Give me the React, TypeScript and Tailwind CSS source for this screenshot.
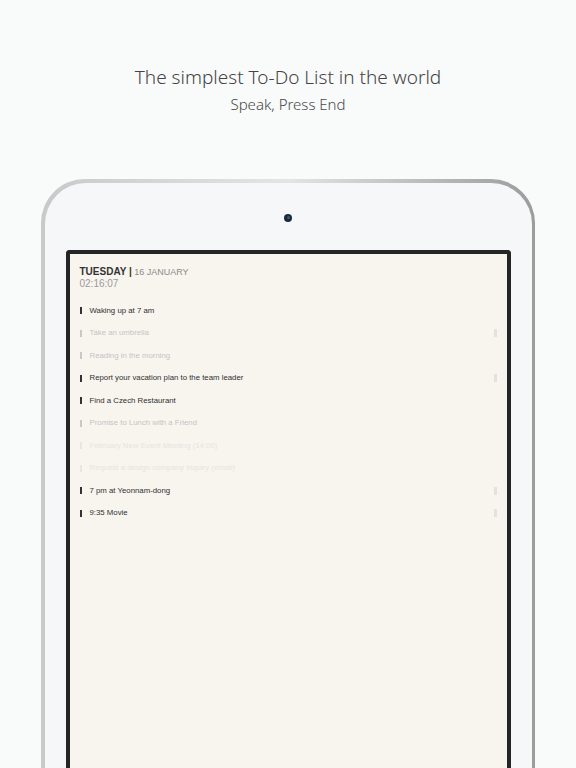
import React from 'react';

type Todo = { text: string; tone: 'active' | 'done' | 'faint'; flag?: boolean };

const TODOS: Todo[] = [
   { text: 'Waking up at 7 am', tone: 'active' },
   { text: 'Take an umbrella', tone: 'done', flag: true },
   { text: 'Reading in the morning', tone: 'done' },
   { text: 'Report your vacation plan to the team leader', tone: 'active', flag: true },
   { text: 'Find a Czech Restaurant', tone: 'active' },
   { text: 'Promise to Lunch with a Friend', tone: 'done' },
   { text: 'February New Event Meeting (14:00)', tone: 'faint' },
   { text: 'Request a design company inquiry (email)', tone: 'faint' },
   { text: '7 pm at Yeonnam-dong', tone: 'active', flag: true },
   { text: '9:35 Movie', tone: 'active', flag: true },
];

const TEXT_TONE = {
   active: 'text-[#2f2f2f]',
   done: 'text-[#c4c4c4]',
   faint: 'text-[#e6e4e0]',
};

const BAR_TONE = {
   active: 'bg-[#333333]',
   done: 'bg-[#c8c8c8]',
   faint: 'bg-[#e8e6e2]',
};

const TodoRow = ({ todo }: { todo: Todo }) => (
   <div className="flex items-center h-[22.5px]">
      <span className={`w-[2px] h-[7px] ${BAR_TONE[todo.tone]}`} />
      <span className={`ml-[8px] text-[7.8px] leading-none font-['Liberation_Sans',sans-serif] ${TEXT_TONE[todo.tone]}`}>{todo.text}</span>
      <span className="flex-1" />
      {todo.flag && <span className="w-[3px] h-[8px] bg-[#e4e2de]" />}
   </div>
);

const App = () => {
   return (
      <div className="w-[576px] h-[768px] overflow-hidden bg-[#f9fafa] flex flex-col items-center font-['Noto_Sans',sans-serif]">
         <h1 className="mt-[63px] text-[19px] leading-[28px] text-[#444444] font-light">The simplest To-Do List in the world</h1>
         <p className="mt-[3px] text-[15px] leading-[20px] text-[#4a4a4a] font-light">Speak, Press End</p>

         {/* device */}
         <div className="mt-[65px] w-[494px] h-[700px] shrink-0 rounded-t-[44px] p-[3.5px] pb-0 bg-gradient-to-r from-[#c9c9c9] via-[#e4e4e4] to-[#9c9c9c]">
            <div className="h-full rounded-t-[41px] bg-[#f6f7f9] flex flex-col items-center px-[21px] pt-[31px]">
               <div className="w-[8px] h-[8px] rounded-full bg-[#1d2a36] flex items-center justify-center">
                  <div className="w-[3px] h-[3px] rounded-full bg-[#2f5f8c]" />
               </div>

               {/* screen */}
               <div className="mt-[28px] self-stretch flex-1 border-[4px] border-b-0 border-[#252525] rounded-t-[4px] bg-[#f8f5ef] px-[10px] pt-[12px]">
                  <div className="font-['Liberation_Sans',sans-serif] text-[10px] leading-[12px]">
                     <div>
                        <span className="font-bold text-[#333333]">TUESDAY |</span>
                        <span className="text-[9px] text-[#8a8a8a]"> 16 JANUARY</span>
                     </div>
                     <div className="text-[#9a9a9a]">02:16:07</div>
                  </div>
                  <div className="mt-[10px]">
                     {TODOS.map(t => <TodoRow key={t.text} todo={t} />)}
                  </div>
               </div>
            </div>
         </div>
      </div>
   );
};

export default App;
